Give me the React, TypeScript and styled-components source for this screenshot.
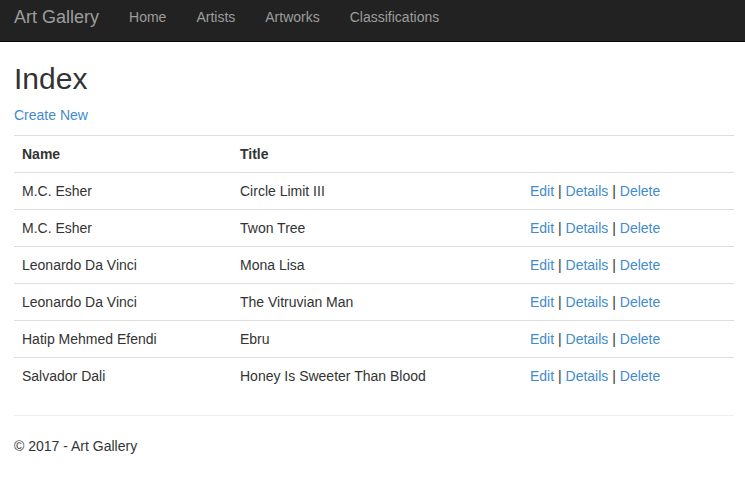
import React from "react";
import styled, { createGlobalStyle } from "styled-components";

const GlobalStyle = createGlobalStyle`
  html, body { margin: 0; padding: 0; background: #fff; }
  body {
    font-family: "Liberation Sans", Arial, Helvetica, sans-serif;
    font-size: 14px;
    line-height: 20px;
    color: #333;
  }
  * { box-sizing: border-box; }
`;

const Navbar = styled.nav`
  height: 42px;
  background: #222;
  border-bottom: 1px solid #080808;
  display: flex;
  align-items: flex-start;
  padding: 7px 0 0 14px;
`;

const Brand = styled.a`
  font-size: 18px;
  line-height: 20px;
  color: #9d9d9d;
  text-decoration: none;
  padding-right: 15px;
`;

const NavList = styled.ul`
  list-style: none;
  margin: 0;
  padding: 0;
  display: flex;
`;

const NavLink = styled.a`
  display: block;
  padding: 0 15px;
  font-size: 14px;
  line-height: 20px;
  color: #9d9d9d;
  text-decoration: none;
`;

const Container = styled.main`
  padding: 0 11px 0 14px;
`;

const Heading = styled.h2`
  font-size: 30px;
  font-weight: 500;
  line-height: 33px;
  margin: 20px 0 10px;
`;

const Para = styled.p`
  margin: 0 0 10px;
`;

const Link = styled.a`
  color: #428bca;
  text-decoration: none;
`;

const Table = styled.table`
  width: 100%;
  border-collapse: collapse;
  border-spacing: 0;
  margin-bottom: 20px;
`;

const Cell = styled.td<{ $w?: number }>`
  border-top: 1px solid #ddd;
  padding: 8px;
  height: 37px;
  line-height: 20px;
  vertical-align: top;
  text-align: left;
  ${(p) => (p.$w ? `width: ${p.$w}px;` : "")}
`;

const HeadCell = styled(Cell).attrs({ as: "th" })`
  font-weight: bold;
`;

const Sep = styled.span`
  color: #333;
`;

const Rule = styled.hr`
  border: 0;
  border-top: 1px solid #eee;
  margin: 20px 0;
  height: 0;
`;

const Footer = styled.footer`
  p { margin: 0 0 10px; }
`;

const rows = [
  ["M.C. Esher", "Circle Limit III"],
  ["M.C. Esher", "Twon Tree"],
  ["Leonardo Da Vinci", "Mona Lisa"],
  ["Leonardo Da Vinci", "The Vitruvian Man"],
  ["Hatip Mehmed Efendi", "Ebru"],
  ["Salvador Dali", "Honey Is Sweeter Than Blood"],
];

export default function App() {
  return (
    <>
      <GlobalStyle />
      <Navbar>
        <Brand href="#">Art Gallery</Brand>
        <NavList>
          {["Home", "Artists", "Artworks", "Classifications"].map((n) => (
            <li key={n}>
              <NavLink href="#">{n}</NavLink>
            </li>
          ))}
        </NavList>
      </Navbar>
      <Container>
        <Heading>Index</Heading>
        <Para>
          <Link href="#">Create New</Link>
        </Para>
        <Table>
          <thead>
            <tr>
              <HeadCell $w={218}>Name</HeadCell>
              <HeadCell $w={290}>Title</HeadCell>
              <HeadCell></HeadCell>
            </tr>
          </thead>
          <tbody>
            {rows.map(([name, title], i) => (
              <tr key={i}>
                <Cell>{name}</Cell>
                <Cell>{title}</Cell>
                <Cell>
                  <Link href="#">Edit</Link> <Sep>|</Sep>{" "}
                  <Link href="#">Details</Link> <Sep>|</Sep>{" "}
                  <Link href="#">Delete</Link>
                </Cell>
              </tr>
            ))}
          </tbody>
        </Table>
        <Rule />
        <Footer>
          <p>© 2017 - Art Gallery</p>
        </Footer>
      </Container>
    </>
  );
}
